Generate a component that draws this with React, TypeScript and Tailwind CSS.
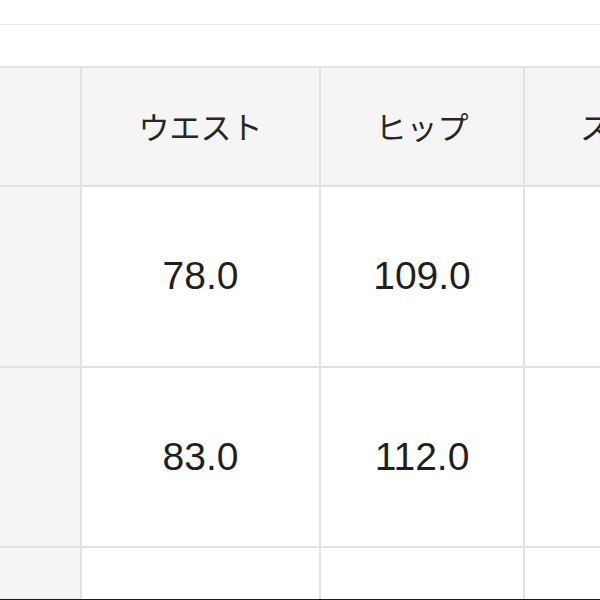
const HEADERS = ["", "ウエスト", "ヒップ", "スソ幅"];

const ROWS = [
  ["", "78.0", "109.0", ""],
  ["", "83.0", "112.0", ""],
  ["", "", "", ""],
];

const jp = { fontFamily: '"Noto Sans CJK JP", "Noto Sans", sans-serif' };
const num = { fontFamily: '"Liberation Sans", Arial, sans-serif' };

export default function App() {
  return (
    <div className="w-[600px] h-[600px] overflow-hidden bg-white flex flex-col relative">
      {/* top rule */}
      <div className="h-[24px] shrink-0" />
      <div className="h-px bg-[#e6e6e6] shrink-0" />
      <div className="h-[41px] shrink-0" />

      {/* size table */}
      <div className="grid grid-cols-[80px_237px_202px_203px] grid-rows-[117px_179px_178px_120px] gap-[2px] pt-[2px] bg-[#e2e2e2] w-max">
        {HEADERS.map((h, i) => (
          <div
            key={h + i}
            style={jp}
            className="bg-[#f5f5f5] flex items-center justify-center text-[31px] font-normal text-[#262626] whitespace-nowrap overflow-hidden"
          >
            {h}
          </div>
        ))}
        {ROWS.map((row, r) =>
          row.map((v, c) => (
            <div
              key={`${r}-${c}`}
              style={num}
              className={
                c === 0
                  ? "bg-[#f5f5f5]"
                  : "bg-white flex items-center justify-center text-[39px] text-[#1f1f1f]"
              }
            >
              {v}
            </div>
          ))
        )}
      </div>

      {/* bottom edge of the capture */}
      <div className="absolute left-0 right-0 bottom-0 h-px bg-[#1a1a1a]" />
    </div>
  );
}
